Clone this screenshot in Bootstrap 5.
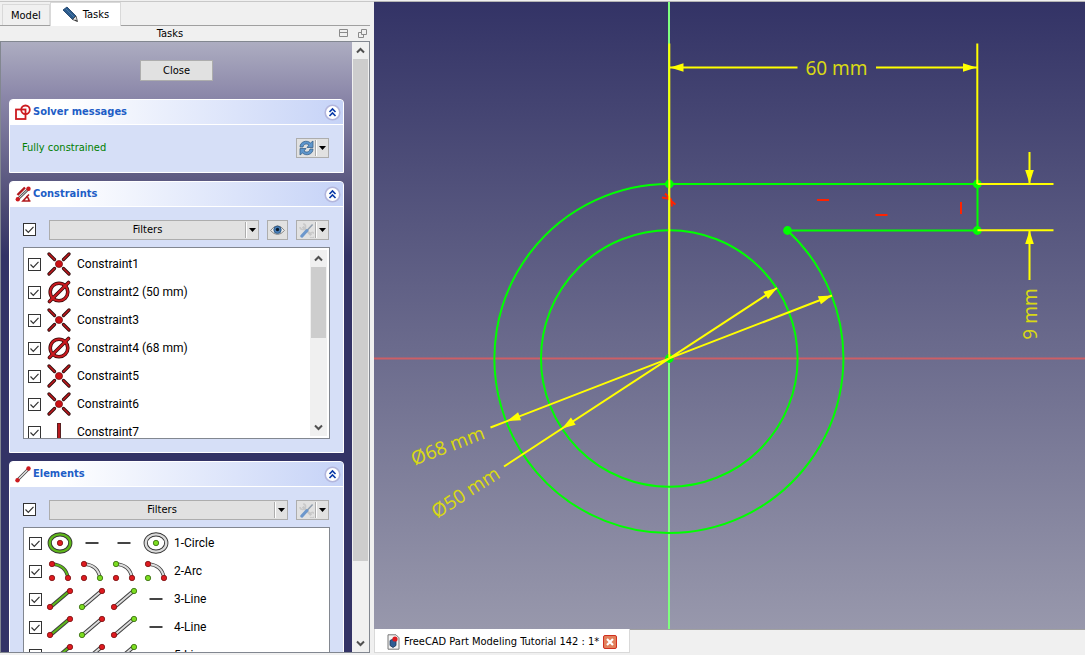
<!DOCTYPE html>
<html lang="en">
<head>
<meta charset="utf-8">
<meta name="viewport" content="width=device-width, initial-scale=1">
<title>FreeCAD Part Modeling Tutorial 142</title>
<link rel="stylesheet" href="https://cdn.jsdelivr.net/npm/bootstrap@5.3.0/dist/css/bootstrap.min.css">
<style>
  body { font-family: "DejaVu Sans Condensed", "DejaVu Sans", sans-serif; font-size: 11px; line-height: 14px; color: #000; background: #f0f0f0; }
  .app { border-top: 1px solid #f0f0f0; }
  .side { width: 374px; padding-right: 4px; border-top: 1px solid #c8c8c8; }
  .view-area { border-top: 1px solid #b4b4b4; }

  .side-tabs { height: 24px; border-bottom: 1px solid #a0a0a0; padding-left: 2px; }
  .side-tabs .nav-link { color: #000; border: 1px solid #d9d9d9; border-bottom: 0; border-radius: 0; padding: 0 8px; height: 21px; background: #f0f0f0; margin: 0; line-height: 22px; }
  .side-tabs .nav-link.active { background: #fff; height: 24px; padding: 0 11px; margin-bottom: -1px; line-height: 24px; color: #000; }
  .pane-title { height: 15px; line-height: 16px; padding-right: 30px; }
  .pane-tools { right: 3px; top: 3px; gap: 10px; }

  .task-scroll { border: 1px solid #828790; margin-bottom: 2px; }
  .task-list { background: linear-gradient(#adadc1 0, #8b87a9 54px, #4b4973 168px, #333366 214px); padding: 18px 8px 0; min-height: 0; }
  .task-box { border-radius: 4px 4px 0 0; border: 1px solid #fff; background: #d6dff7; margin-bottom: 8px; }
  .task-head { background: linear-gradient(90deg, #fff 15%, #c6d3f7); border-radius: 3px 3px 0 0; border-bottom: 1px solid #fff; height: 25px; padding: 0 2px 0 5px; gap: 1px; color: #215dc6; }
  .task-head h2 { font-size: 11px; line-height: 14px; font-weight: 700; }
  .task-body { padding: 13px 14px 13px 13px; }
  .solver .task-body { padding-bottom: 14px; padding-left: 12px; }
  .solved { color: #008000; }

  .tool { border: 1px solid #adadad; background: #e1e1e1; border-radius: 0; color: #000; font-size: 11px; line-height: 14px; padding: 0; height: 20px; }
  .tool:hover { background: #e5f1fb; border-color: #0078d7; }
  .tool .arrow { width: 13px; height: 16px; border-left: 1px solid #adadad; box-shadow: inset 1px 0 #fff; display: flex; align-items: center; justify-content: center; }
  .tool.split { width: 33px; justify-content: space-between; padding-left: 2px; }
  .tool.sight { width: 21px; }
  .tool.close-all { width: 73px; height: 21px; margin-bottom: 18px; }
  .filter-row { gap: 8px; margin-bottom: 7px; }
  .filter-row .tick { margin: 3px 5px 0 0; }

  .tick { appearance: none; width: 13px; height: 13px; border: 1px solid #333; background: #fff; margin: 0; flex: none; display: block; }
  .tick:checked { background: #fff url("data:image/svg+xml,%3Csvg xmlns='http://www.w3.org/2000/svg' viewBox='0 0 11 11'%3E%3Cpath d='M1.5 5.5l2.8 2.8L9.5 2.8' fill='none' stroke='%23333' stroke-width='1.2'/%3E%3C/svg%3E") center/11px no-repeat; }

  .listing { border: 1px solid #828790; background: #fff; font-family: Roboto, "Noto Sans", sans-serif; font-size: 12px; margin-right: -1px; }
  .listing ul { padding: 2px 4px 0; }
  .listing li { height: 28px; }
  .rows-fixed { height: 192px; }
  .elements ul { padding-left: 5px; padding-top: 1px; }

  .vscroll { width: 17px; background: #f0f0f0; flex: none; }
  .vscroll button { height: 17px; border: 0; background: none; padding: 0; display: flex; align-items: center; justify-content: center; }
  .vscroll .thumb { background: #cdcdcd; margin: 0 1px; }
  .listing .vscroll { margin: 2px; }
  .listing .vscroll .thumb { height: 71px; }
  .task-scroll > .vscroll .thumb { height: 502px; }

  .view { background: linear-gradient(#333366, #9898ac); min-height: 0; }
  .view text { font-family: "Noto Sans", sans-serif; font-size: 19px; fill: #d8d814; text-anchor: middle; }
  .doc-bar { height: 26px; border-top: 1px solid #a0a0a0; }
  .doc-tab { background: #fff; border: 1px solid #d9d9d9; border-top: 0; height: 24px; width: 256px; margin-top: -1px; padding: 2px 12px 0; }
  .doc-tab a { color: #000; text-decoration: none; white-space: nowrap; }
  .doc-close { width: 14px; height: 14px; border: 1px solid #d03020; border-radius: 2px; background: #e2805c; padding: 0; display: flex; align-items: center; justify-content: center; }
</style>
</head>
<body>
<svg class="d-none" aria-hidden="true">
  <symbol id="i-fold" viewBox="0 0 17 17"><circle cx="8.500" cy="8.500" r="7.300" fill="#fff" stroke="#b3b6dc" stroke-width="1.600"/><path d="M5.500 8l3-3 3 3M5.500 12l3-3 3 3" fill="none" stroke="#0a3aa8" stroke-width="1.600"/></symbol>
  <symbol id="i-down" viewBox="0 0 7 4"><path d="M0 0h7L3.500 4z"/></symbol>
  <symbol id="i-tools" viewBox="0 0 16 16"><path d="M4 4l9 9" stroke="#c6c6c6" stroke-width="2.600"/><path d="M4.500 1a3 3 0 1 1-3.500 3.500M12 15.200a3 3 0 1 0-.2-4" fill="none" stroke="#c9c9c9" stroke-width="1.800"/><path d="M14.500 1.500L9 7.500" stroke="#8f9dad" stroke-width="1.600"/><path d="M8.500 8L3 14" stroke="#6c97cc" stroke-width="3.200" stroke-linecap="round"/></symbol>
  <symbol id="i-coin" viewBox="-12 -12 24 24"><g stroke-linecap="round"><path d="M-10-10l5.500 5.500M10-10L4.500-4.500M-10 10l5.500-5.500M10 10L4.500 4.500" stroke="#2b0a0a" stroke-width="3.200"/><path d="M-10-10l5.500 5.500M10-10L4.500-4.500M-10 10l5.500-5.500M10 10L4.500 4.500" stroke="#c41a1f" stroke-width="1.500"/></g><circle r="3.600" fill="#cc1015" stroke="#5a0a0a" stroke-width=".6"/></symbol>
  <symbol id="i-dia" viewBox="-12 -12 24 24"><g fill="none" stroke="#3a0a0a" stroke-width="3.600"><circle r="8.800"/><path d="M-9.500 9.500l19-19" stroke-linecap="round"/></g><g fill="none" stroke="#cc1a1f" stroke-width="2"><circle r="8.800"/><path d="M-9.500 9.500l19-19" stroke-linecap="round"/></g></symbol>
  <symbol id="i-vert" viewBox="-12 -12 24 24"><path d="M0-9V9" stroke="#3a0a0a" stroke-width="3.800"/><path d="M0-8.500V8.500" stroke="#b81a1f" stroke-width="2.200"/></symbol>
  <symbol id="i-dash" viewBox="-14 -14 28 28"><path d="M-6.500 0H6.500" stroke="#444" stroke-width="2"/></symbol>
  <symbol id="i-circle" viewBox="-14 -14 28 28"><ellipse rx="10.300" ry="8.600" fill="#fff" stroke="#333" stroke-width="4.200"/><ellipse rx="10.300" ry="8.600" fill="none" stroke="currentColor" stroke-width="2.400"/></symbol>
  <symbol id="i-line" viewBox="-14 -14 28 28"><path d="M-10 8.500L10-8.500" stroke="#3c3c3c" stroke-width="4"/><path d="M-10 8.500L10-8.500" stroke="currentColor" stroke-width="2"/></symbol>
  <symbol id="i-arc" viewBox="-14 -14 28 28"><path d="M-8-7Q6-6 8 7" fill="none" stroke="#3c3c3c" stroke-width="3.600"/><path d="M-8-7Q6-6 8 7" fill="none" stroke="currentColor" stroke-width="2"/></symbol>
  <symbol id="i-red" viewBox="-4 -4 8 8"><circle r="2.700" fill="#dd1a1f" stroke="#7a1010" stroke-width=".8"/></symbol>
  <symbol id="i-green" viewBox="-4 -4 8 8"><circle r="2.700" fill="#7bdc20" stroke="#33660a" stroke-width=".8"/></symbol>
</svg>

<div class="app d-flex vh-100 overflow-hidden">
  <aside class="side d-flex flex-column flex-shrink-0">
    <nav class="side-tabs nav d-flex align-items-end flex-shrink-0">
      <a class="nav-link" href="#model">Model</a>
      <a class="nav-link active d-flex align-items-center gap-1" href="#tasks">
        <svg width="17" height="17" viewBox="0 0 17 17"><path d="M1 4l4-3 9 9-3.500 3.500z" fill="#2b5b8c" stroke="#2c4e74"/><path d="M4 3l8.500 8.500" stroke="#4a7aaa"/><path d="M14 10l1.500 5.500-5-2z" fill="#e6e6e6" stroke="#333" stroke-width=".8"/><path d="M13.500 13.500l2 2-2.300-.8z" fill="#111"/></svg>Tasks</a>
    </nav>
    <div class="pane-title position-relative text-center flex-shrink-0">Tasks
      <div class="pane-tools position-absolute d-flex">
        <svg width="9" height="9" viewBox="0 0 9 9" fill="none" stroke="#8a8a8a"><path d="M.5.500h8v7h-8zM.5 3.500h8"/></svg>
        <svg width="9" height="9" viewBox="0 0 9 9" fill="none" stroke="#8a8a8a"><path d="M3.500.5h5v5h-5zM3.500 3.500h-3v5h5v-3"/></svg>
      </div>
    </div>

    <div class="task-scroll d-flex flex-grow-1 overflow-hidden">
      <div class="task-list flex-grow-1 overflow-hidden">
        <div class="d-flex justify-content-center"><button class="tool close-all" type="button">Close</button></div>

        <section class="task-box solver">
          <header class="task-head d-flex align-items-center">
            <svg width="17" height="17" viewBox="0 0 17 17" fill="none" stroke="#cc1a1f" stroke-width="1.800"><rect x="1" y="5.500" width="9.500" height="9.500"/><circle cx="10.500" cy="5.800" r="4.300"/></svg>
            <h2 class="m-0 flex-grow-1">Solver messages</h2>
            <svg width="17" height="17"><use href="#i-fold"/></svg>
          </header>
          <div class="task-body d-flex align-items-center">
            <span class="solved flex-grow-1">Fully constrained</span>
            <button class="tool split d-flex align-items-center" type="button" aria-label="Update">
              <svg width="15" height="16" viewBox="0 0 15 16"><path d="M1 7C1 1.500 8-.5 11.500 3L14 1v6.500H8L10 5C7.500 3 4.500 4 4 7z" fill="#5d95cc" stroke="#38628c" stroke-width=".8"/><path d="M14 9c0 5.500-7 7.500-10.500 4L1 15V8.500h6L5 11c2.500 2 5.500 1 6-2z" fill="#5d95cc" stroke="#38628c" stroke-width=".8"/></svg>
              <span class="arrow"><svg width="7" height="4"><use href="#i-down"/></svg></span>
            </button>
          </div>
        </section>

        <section class="task-box">
          <header class="task-head d-flex align-items-center">
            <svg width="17" height="17" viewBox="0 0 17 17"><path d="M2.500 9L10 1.500" stroke="#b0181c" stroke-width="2.400"/><path d="M3 13L14 2.500" stroke="#555" stroke-width="2.600"/><path d="M3 13L14 2.500" stroke="#ddd"/><path d="M14 8.500L8 15h7.500M11 10.500q3 1 3 4.500" fill="none" stroke="#b0181c" stroke-width="1.600"/><circle cx="2.800" cy="13.200" r="2.200" fill="#cc1a1f"/><circle cx="13.500" cy="2.700" r="2.200" fill="#cc1a1f"/></svg>
            <h2 class="m-0 flex-grow-1">Constraints</h2>
            <svg width="17" height="17"><use href="#i-fold"/></svg>
          </header>
          <div class="task-body">
            <div class="d-flex filter-row">
              <input class="tick" type="checkbox" checked aria-label="Show all constraints">
              <button class="tool d-flex align-items-center flex-grow-1" type="button"><span class="flex-grow-1">Filters</span><span class="arrow"><svg width="7" height="4"><use href="#i-down"/></svg></span></button>
              <button class="tool sight d-flex align-items-center justify-content-center" type="button" aria-label="Visibility"><svg width="15" height="14" viewBox="0 0 15 14"><path d="M.5 7.500Q7.500-2 14.500 7.500 7.500 15.500.5 7.500z" fill="#eee" stroke="#888"/><circle cx="7.500" cy="6.800" r="3.700" fill="#4a7fb8" stroke="#25527f" stroke-width=".8"/><circle cx="7.500" cy="6.500" r="1.700" fill="#0d1c2c"/></svg></button>
              <button class="tool split d-flex align-items-center" type="button" aria-label="Settings"><svg width="15" height="15"><use href="#i-tools"/></svg><span class="arrow"><svg width="7" height="4"><use href="#i-down"/></svg></span></button>
            </div>
            <div class="listing rows-fixed d-flex overflow-hidden">
              <ul class="list-unstyled m-0 flex-grow-1" id="constraints"></ul>
              <div class="vscroll d-flex flex-column">
                <button type="button" aria-label="Up"><svg width="9" height="7" viewBox="0 0 9 7"><path d="M1 5.500L4.500 2 8 5.500" fill="none" stroke="#505050" stroke-width="2"/></svg></button>
                <div class="thumb"></div>
                <button class="mt-auto" type="button" aria-label="Down"><svg width="9" height="7" viewBox="0 0 9 7"><path d="M1 1.500L4.500 5 8 1.500" fill="none" stroke="#505050" stroke-width="2"/></svg></button>
              </div>
            </div>
          </div>
        </section>

        <section class="task-box">
          <header class="task-head d-flex align-items-center">
            <svg width="17" height="17" viewBox="0 0 17 17"><path d="M2.500 14L14 2.500" stroke="#444" stroke-width="3"/><path d="M2.500 14L14 2.500" stroke="#e6e6e6" stroke-width="1.400"/><circle cx="2.500" cy="14.200" r="2.200" fill="#cc1a1f"/><circle cx="13.500" cy="2.500" r="2.200" fill="#cc1a1f"/></svg>
            <h2 class="m-0 flex-grow-1">Elements</h2>
            <svg width="17" height="17"><use href="#i-fold"/></svg>
          </header>
          <div class="task-body">
            <div class="d-flex filter-row">
              <input class="tick" type="checkbox" checked aria-label="Show all elements">
              <button class="tool d-flex align-items-center flex-grow-1" type="button"><span class="flex-grow-1">Filters</span><span class="arrow"><svg width="7" height="4"><use href="#i-down"/></svg></span></button>
              <button class="tool split d-flex align-items-center" type="button" aria-label="Settings"><svg width="15" height="15"><use href="#i-tools"/></svg><span class="arrow"><svg width="7" height="4"><use href="#i-down"/></svg></span></button>
            </div>
            <div class="listing elements"><ul class="list-unstyled m-0" id="elements"></ul></div>
          </div>
        </section>
      </div>
      <div class="vscroll d-flex flex-column">
        <button type="button" aria-label="Scroll up"><svg width="9" height="7" viewBox="0 0 9 7"><path d="M1 5.500L4.500 2 8 5.500" fill="none" stroke="#505050" stroke-width="2"/></svg></button>
        <div class="thumb"></div>
        <button class="mt-auto" type="button" aria-label="Scroll down"><svg width="9" height="7" viewBox="0 0 9 7"><path d="M1 1.500L4.500 5 8 1.500" fill="none" stroke="#505050" stroke-width="2"/></svg></button>
      </div>
    </div>
  </aside>

  <main class="view-area flex-grow-1 d-flex flex-column overflow-hidden">
    <div class="view flex-grow-1 overflow-hidden">
      <svg class="d-block w-100 h-100" viewBox="374 2 711 627" preserveAspectRatio="xMidYMid slice" role="img" aria-label="Sketch">
        <defs><path id="tip" d="M0 0L-13.500-4.300V4.300z" fill="#ff0"/></defs>
        <path d="M374 358.500H1085" stroke="#cc5f66" stroke-width="2"/>
        <path d="M669 2V629" stroke="#7fff7f" stroke-width="2"/>
        <g fill="none" stroke="#0f0" stroke-width="2">
          <circle cx="669.300" cy="358.500" r="128.300"/>
          <path d="M669.300 184A174.500 174.500 0 1 0 787.500 230.500H977.500V184H669.300"/>
        </g>
        <g fill="#0f0"><circle cx="669.300" cy="184" r="4.400"/><circle cx="977.300" cy="184" r="4.400"/><circle cx="977.300" cy="230.500" r="4.400"/><circle cx="787.500" cy="230.500" r="4.400"/><circle cx="669.300" cy="358.500" r="4.400"/></g>
        <path d="M817 200h12M875.500 215h12M961 202v12M662 197.500l6 1 7.500 6M665 193.500l6 6 1 7" fill="none" stroke="#f20" stroke-width="2"/>
        <g stroke="#ff0" stroke-width="2" fill="none">
          <path d="M669.300 43.500V358.500M977.300 43.500V184M670 67.500H797.500M876 67.500H977M977.500 184H1053.500M977.500 230.300H1053.500M1029.500 152V183M1029.500 231V280M490.500 427.500L832 295.500M504 466.500L777 288"/>
        </g>
        <use href="#tip" transform="translate(670 67.500) rotate(180)"/>
        <use href="#tip" transform="translate(976.500 67.500)"/>
        <use href="#tip" transform="translate(1029.500 183.500) rotate(90)"/>
        <use href="#tip" transform="translate(1029.500 230.500) rotate(-90)"/>
        <use href="#tip" transform="translate(832 295.500) rotate(-21)"/>
        <use href="#tip" transform="translate(507 421) rotate(159)"/>
        <use href="#tip" transform="translate(777 288) rotate(-33)"/>
        <use href="#tip" transform="translate(562 428.500) rotate(147)"/>
        <text x="836.500" y="75">60 mm</text>
        <text transform="translate(1037 314) rotate(-90)">9 mm</text>
        <text transform="translate(450 452) rotate(-21)">Ø68 mm</text>
        <text transform="translate(469 498) rotate(-33)">Ø50 mm</text>
      </svg>
    </div>
    <div class="doc-bar flex-shrink-0">
      <div class="doc-tab d-flex align-items-center">
        <svg class="me-1 flex-shrink-0" width="13" height="16" viewBox="0 0 13 16"><path d="M1 .8h8l3 3v11.400H1z" fill="#f4f4f4" stroke="#777"/><path d="M3 6.500l3-1.500 3 1.500v5l-3 2-3-2z" fill="#2f5d94" stroke="#1a3354" stroke-width=".8"/><circle cx="8" cy="5" r="2.600" fill="#dd1a1f"/></svg>
        <a href="#doc">FreeCAD Part Modeling Tutorial 142 : 1*</a>
        <button class="doc-close ms-1 flex-shrink-0" type="button" aria-label="Close document"><svg width="8" height="8" viewBox="0 0 8 8"><path d="M1 1l6 6M7 1L1 7" stroke="#fff" stroke-width="2.200"/></svg></button>
      </div>
    </div>
  </main>
</div>

<script src="https://cdn.jsdelivr.net/npm/bootstrap@5.3.0/dist/js/bootstrap.bundle.min.js"></script>
<script>
  const constraints = [["coin", "Constraint1"], ["dia", "Constraint2 (50 mm)"], ["coin", "Constraint3"], ["dia", "Constraint4 (68 mm)"], ["coin", "Constraint5"], ["coin", "Constraint6"], ["vert", "Constraint7"]];
  document.getElementById("constraints").innerHTML = constraints.map(([icon, name]) =>
    `<li><label class="d-flex align-items-center h-100"><input class="tick" type="checkbox" checked><svg class="mx-1" width="28" height="24"><use href="#i-${icon}"/></svg><span>${name}</span></label></li>`).join("");

  const dot = (kind, x, y) => `<use href="#i-${kind}" x="${x + 10}" y="${y + 10}" width="8" height="8"/>`;
  const shape = (name, color, dots) => `<svg width="28" height="28" class="me-1" color="${color}"><use href="#i-${name}"/>${dots}</svg>`;
  const ends = { circle: [[0, 0]], line: [[-10, 8], [10, -8]], arc: [[8, 7], [-8, -7], [-8, 7]] };
  const cell = (name, selected) => {
    const dots = ends[name].map(([x, y], i) => dot(i === selected ? "green" : "red", x, y)).join("");
    return shape(name, selected < 0 ? "#5fb81a" : "#dcdcdc", dots);
  };
  const dash = shape("dash", "#444", "");
  const kinds = {
    Circle: cell("circle", -1) + dash + dash + cell("circle", 0),
    Arc: cell("arc", -1) + cell("arc", 0) + cell("arc", 1) + cell("arc", 2),
    Line: cell("line", -1) + cell("line", 0) + cell("line", 1) + dash
  };
  document.getElementById("elements").innerHTML = ["1-Circle", "2-Arc", "3-Line", "4-Line", "5-Line"].map(name =>
    `<li><label class="d-flex align-items-center h-100"><input class="tick me-1" type="checkbox" checked>${kinds[name.split("-")[1]]}<span>${name}</span></label></li>`).join("");
</script>
</body>
</html>
